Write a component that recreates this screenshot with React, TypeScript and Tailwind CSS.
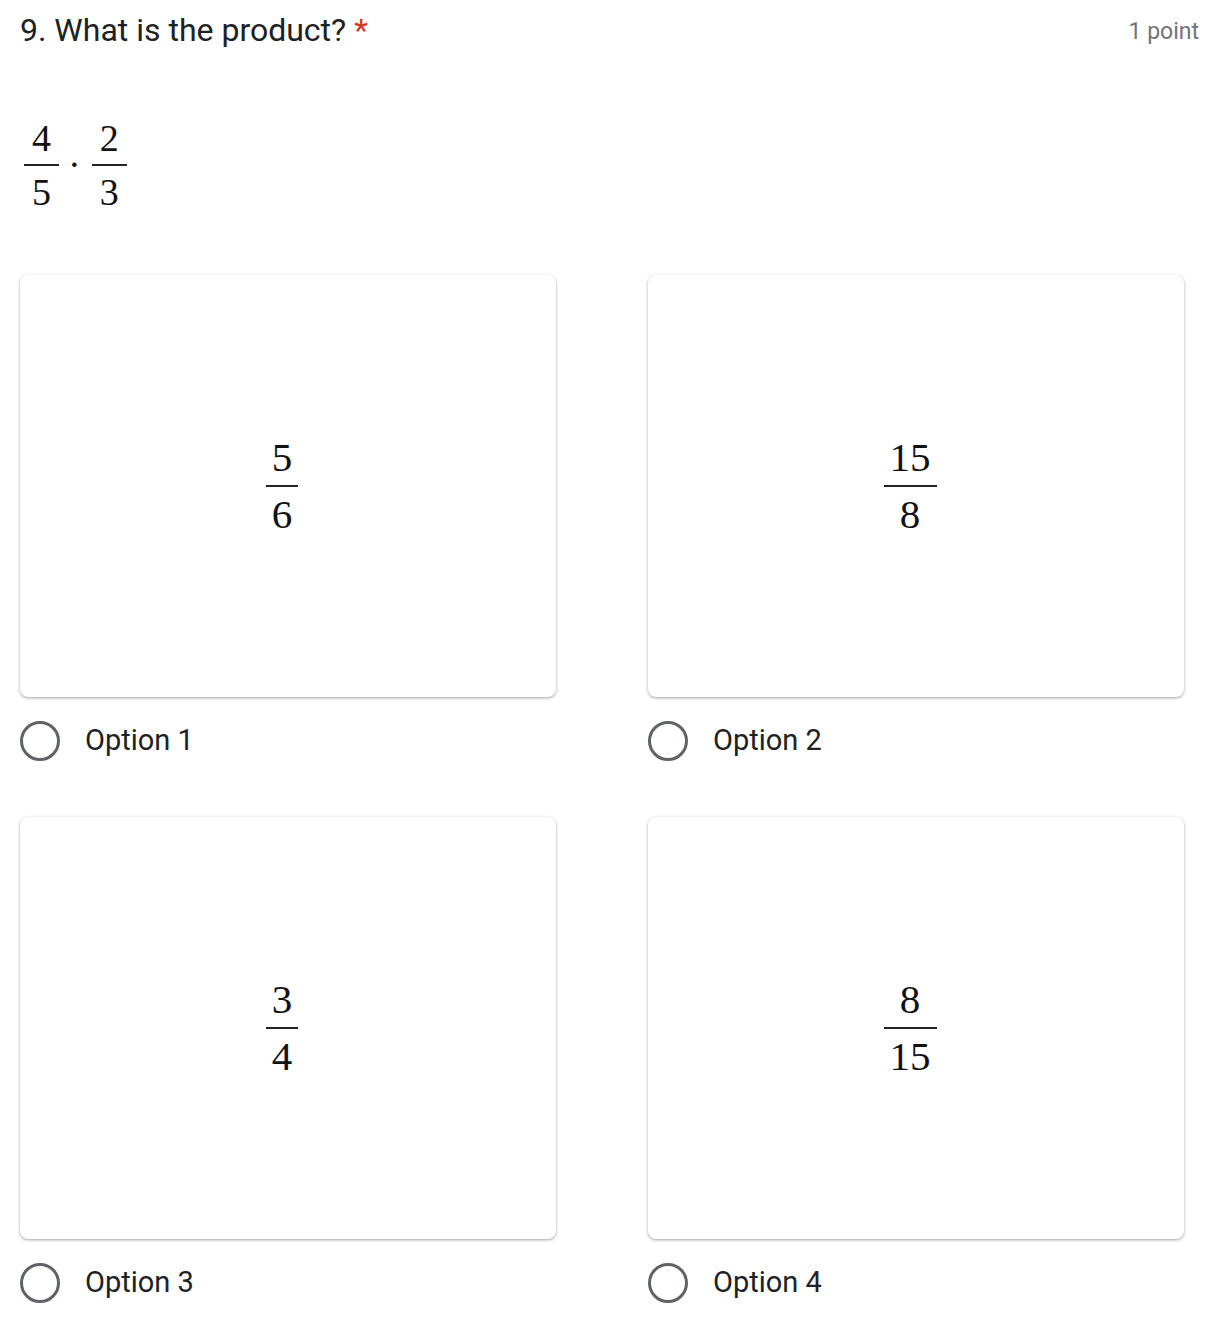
import React from 'react';

function Frac({ num, den, size, bar, pad }: { num: string; den: string; size: string; bar: string; pad: string }) {
  return (
    <span className={`inline-flex flex-col items-center leading-none ${size}`} style={{ fontFamily: '"Liberation Serif", "Times New Roman", serif' }}>
      <span className={pad}>{num}</span>
      <span className={`block self-stretch bg-[#222] ${bar}`} />
      <span className={pad}>{den}</span>
    </span>
  );
}

function OptionCard({ num, den, label }: { num: string; den: string; label: string }) {
  return (
    <div className="flex flex-col">
      <div className="h-[422px] rounded-lg bg-white shadow-[0_1px_2px_0_rgba(60,64,67,0.3),0_1px_3px_1px_rgba(60,64,67,0.15)] flex items-center justify-center pr-3">
        <Frac num={num} den={den} size="text-[41px] text-[#111]" bar="h-[2px] my-[7px]" pad="px-[6px]" />
      </div>
      <div className="flex items-center mt-6 h-10">
        <span className="w-10 h-10 rounded-full border-[3.5px] border-[#5f6368]" />
        <span className="ml-[25px] text-[29px] text-[#202124]">{label}</span>
      </div>
    </div>
  );
}

export default function App() {
  return (
    <div className="bg-white w-[1222px] h-[1334px] pl-5 pr-[23px] pt-[6px]" style={{ fontFamily: 'Roboto, "Noto Sans", sans-serif' }}>
      <div className="flex justify-between items-start">
        <h1 className="text-[32px] text-[#202124] leading-[48px]">
          9. What is the product? <span className="text-[#d93025]">*</span>
        </h1>
        <span className="text-[23px] text-[#70757a] leading-[48px] mt-[2px]">1 point</span>
      </div>

      <div className="flex items-center mt-[63px] ml-[4px] text-[#111]">
        <Frac num="4" den="5" size="text-[38px]" bar="h-[2px] my-[7px]" pad="px-[8px]" />
        <span className="text-[38px] ml-[9px] mr-[11px] leading-none -mt-[2px]" style={{ fontFamily: '"Liberation Serif", serif' }}>·</span>
        <Frac num="2" den="3" size="text-[38px]" bar="h-[2px] my-[7px]" pad="px-[8px]" />
      </div>

      <div className="grid grid-cols-[536px_536px] gap-x-[92px] gap-y-[56px] mt-[64px]">
        <OptionCard num="5" den="6" label="Option 1" />
        <OptionCard num="15" den="8" label="Option 2" />
        <OptionCard num="3" den="4" label="Option 3" />
        <OptionCard num="8" den="15" label="Option 4" />
      </div>
    </div>
  );
}
